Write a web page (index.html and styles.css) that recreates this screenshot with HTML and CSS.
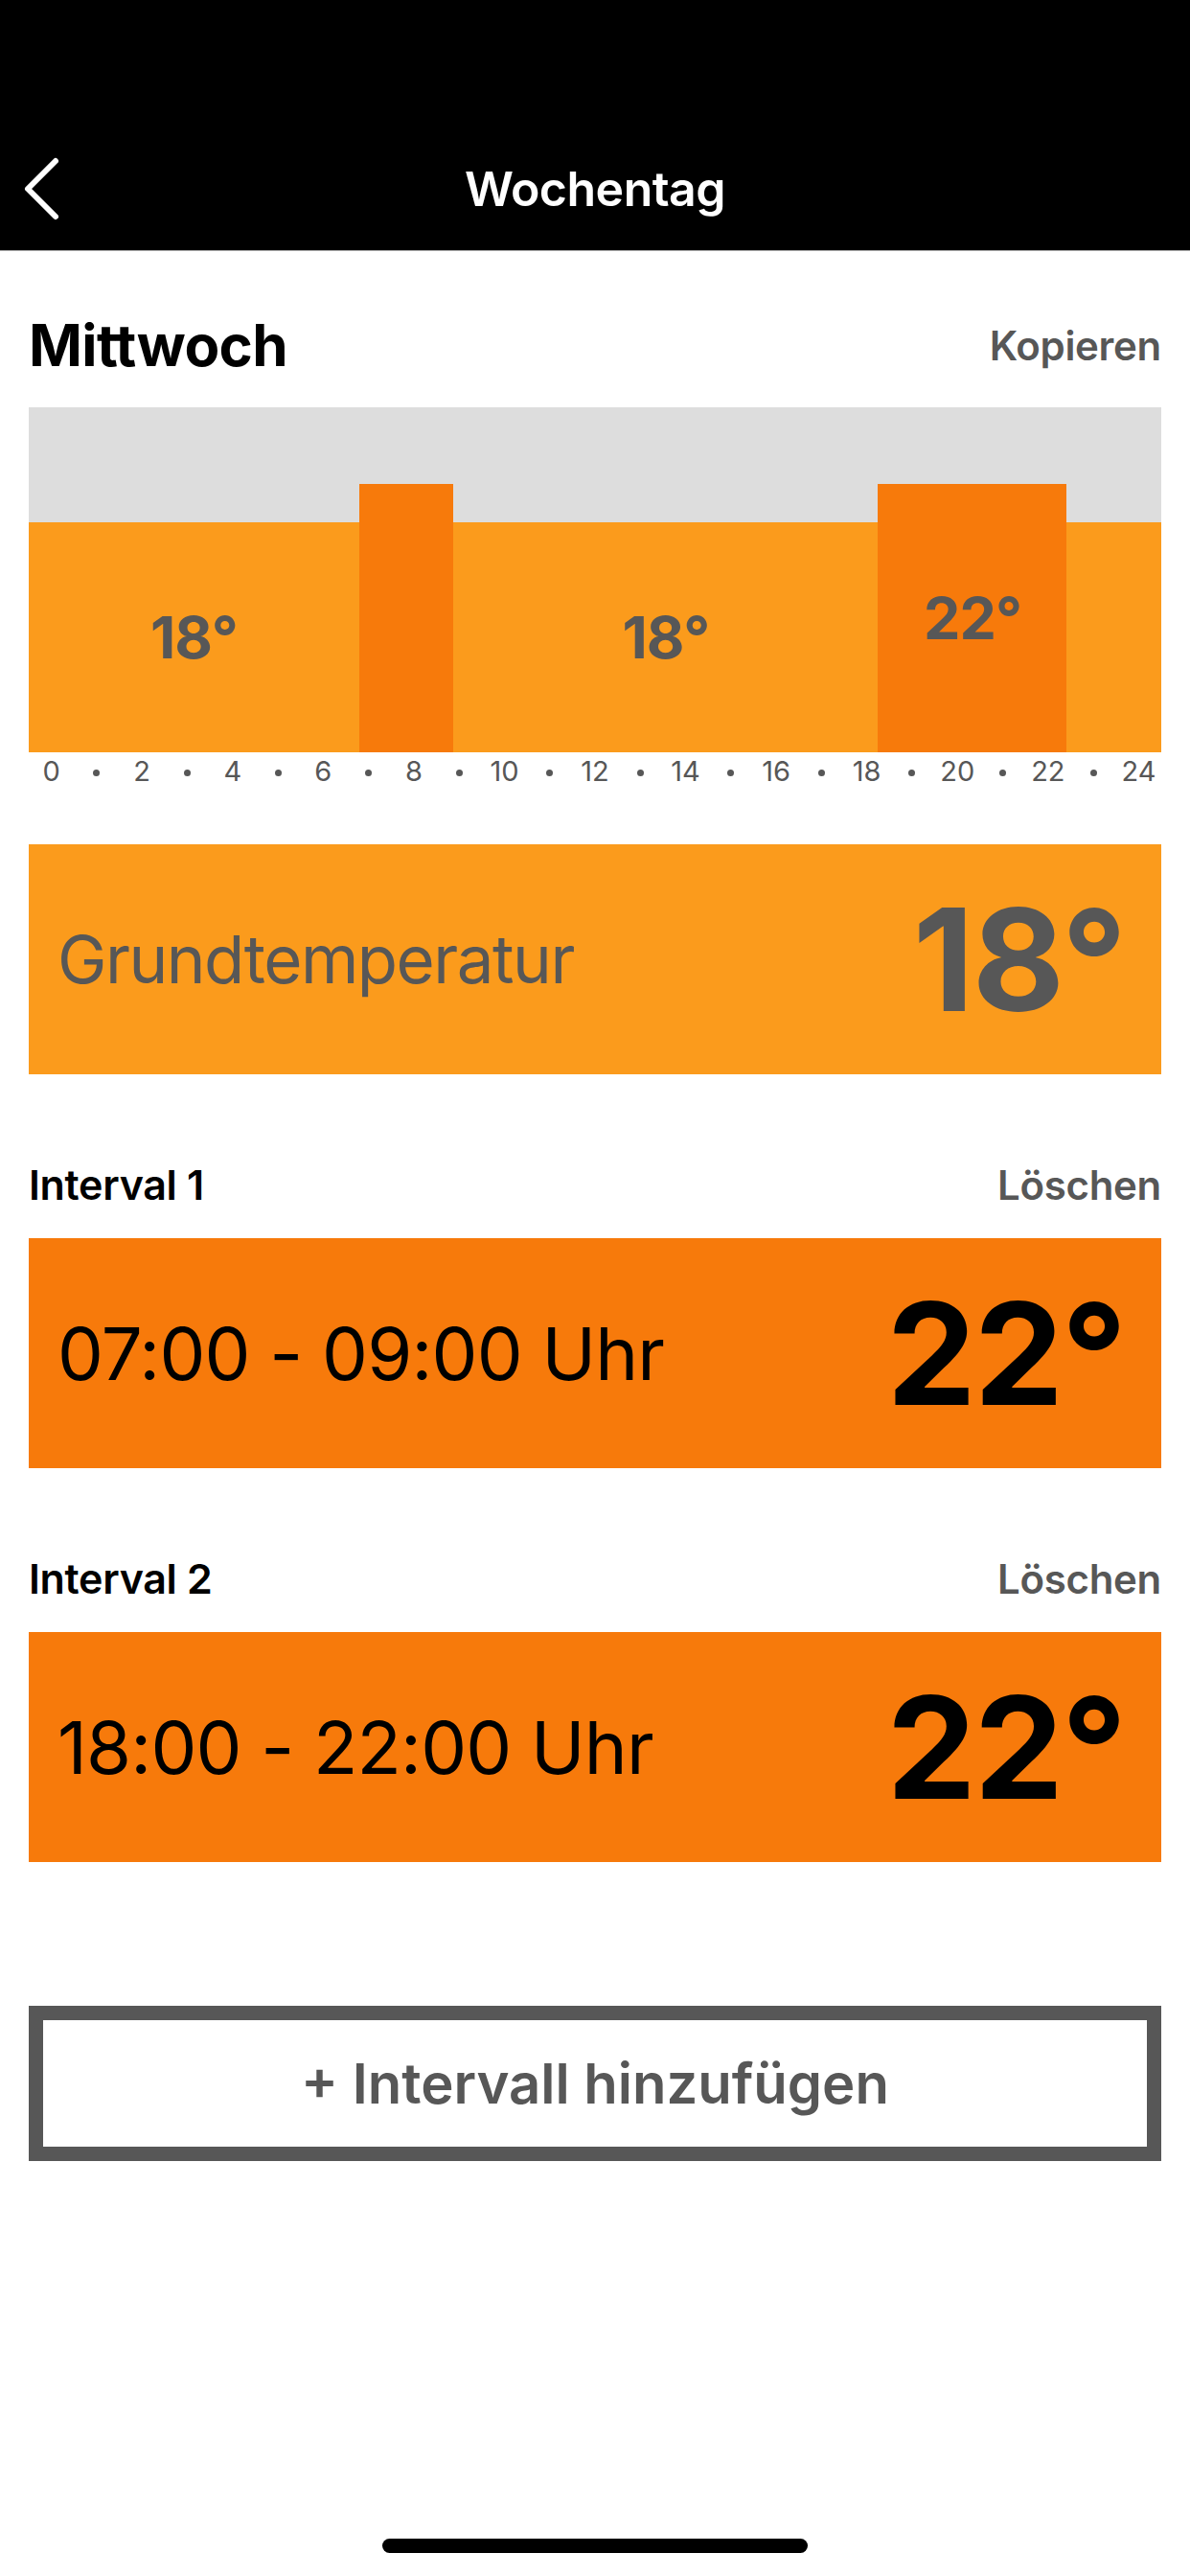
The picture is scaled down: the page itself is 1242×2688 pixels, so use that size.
FILE: index.html
```html
<!DOCTYPE html>
<html lang="de">
<head>
  <meta charset="UTF-8">
  <meta name="viewport" content="width=device-width, initial-scale=1.0">
  <title>Wochentag</title>
  <link rel="stylesheet" href="styles.css">
</head>
<body>
  <header class="topbar">
    <div class="nav">
      <a class="back" href="#">
        <svg width="44" height="70" viewBox="0 0 44 70">
          <polyline points="34,6 5,35 34,64" fill="none" stroke="#fff" stroke-width="6" stroke-linecap="round" stroke-linejoin="round"/>
        </svg>
      </a>
      <h1 class="nav-title">Wochentag</h1>
      <span></span>
    </div>
  </header>

  <main class="content">
    <div class="day-head">
      <h2 class="day-name">Mittwoch</h2>
      <a class="link" href="#">Kopieren</a>
    </div>

    <!-- Tagesverlauf: Breite = Stunden / 24 -->
    <div class="chart">
      <div class="seg seg-base" style="width: 29.1667%"><span>18°</span></div>
      <div class="seg seg-int" style="width: 8.3333%"></div>
      <div class="seg seg-base" style="width: 37.5%"><span>18°</span></div>
      <div class="seg seg-int" style="width: 16.6667%"><span>22°</span></div>
      <div class="seg seg-base" style="width: 8.3333%"></div>
    </div>
    <div class="axis">
      <span>0</span><span><i class="dot"></i></span>
      <span>2</span><span><i class="dot"></i></span>
      <span>4</span><span><i class="dot"></i></span>
      <span>6</span><span><i class="dot"></i></span>
      <span>8</span><span><i class="dot"></i></span>
      <span>10</span><span><i class="dot"></i></span>
      <span>12</span><span><i class="dot"></i></span>
      <span>14</span><span><i class="dot"></i></span>
      <span>16</span><span><i class="dot"></i></span>
      <span>18</span><span><i class="dot"></i></span>
      <span>20</span><span><i class="dot"></i></span>
      <span>22</span><span><i class="dot"></i></span>
      <span>24</span>
    </div>

    <div class="card card-base">
      <span class="card-label">Grundtemperatur</span>
      <span class="card-temp">18°</span>
    </div>

    <div class="interval-head">
      <h3>Interval 1</h3>
      <a class="link" href="#">Löschen</a>
    </div>
    <div class="card card-int">
      <span class="card-label">07:00 - 09:00 Uhr</span>
      <span class="card-temp">22°</span>
    </div>

    <div class="interval-head">
      <h3>Interval 2</h3>
      <a class="link" href="#">Löschen</a>
    </div>
    <div class="card card-int">
      <span class="card-label">18:00 - 22:00 Uhr</span>
      <span class="card-temp">22°</span>
    </div>

    <button class="add-btn">+ Intervall hinzufügen</button>
  </main>

  <div class="home-indicator"></div>
</body>
</html>
```

FILE: styles.css
```css
body {
  margin: 0;
  width: 1242px;
  height: 2688px;
  position: relative;
  background-color: #fff;
  color: #000;
  font-family: Inter, "Noto Sans", sans-serif;
  overflow: hidden;
}
h1, h2, h3 {
  margin: 0;
}
a {
  text-decoration: none;
}

.topbar {
  height: 262px;
  box-sizing: border-box;
  padding-top: 140px;
  background-color: #000;
  border-bottom: 1px solid #a8a8a8;
}
.nav {
  height: 114px;
  display: grid;
  grid-template-columns: 1fr auto 1fr;
  align-items: center;
}
.back {
  display: flex;
  align-items: center;
  padding-left: 24px;
}
.nav-title {
  color: #fff;
  font-size: 50px;
  font-weight: 600;
  letter-spacing: -0.5px;
}

.content {
  padding: 0 30px;
}
.day-head {
  margin-top: 63px;
  height: 70px;
  display: flex;
  justify-content: space-between;
  align-items: center;
}
.day-name {
  font-size: 60px;
  font-weight: 700;
  letter-spacing: -0.6px;
}
.link {
  color: #575757;
  font-size: 42px;
  font-weight: 600;
  letter-spacing: -0.3px;
}

.chart {
  margin-top: 30px;
  height: 360px;
  display: flex;
  align-items: flex-end;
  background-color: #dddddd;
}
.seg {
  display: flex;
  justify-content: center;
  align-items: center;
  color: #575757;
  font-size: 61px;
  font-weight: 700;
  letter-spacing: -1px;
}
.seg-base {
  height: 240px;
  background-color: #fb9b1c;
}
.seg-int {
  height: 280px;
  background-color: #f77a0b;
}
.axis {
  height: 40px;
  display: flex;
  color: #575757;
  font-size: 29px;
  line-height: 40px;
}
.axis span {
  flex: 1;
  text-align: center;
}
.dot {
  display: inline-block;
  width: 7px;
  height: 7px;
  border-radius: 50%;
  background-color: #575757;
  vertical-align: middle;
  margin-top: -2px;
}

.card {
  height: 240px;
  box-sizing: border-box;
  padding: 0 38px 0 30px;
  display: flex;
  justify-content: space-between;
  align-items: center;
}
.card-base {
  margin-top: 56px;
  background-color: #fb9b1c;
  color: #575757;
}
.card-base .card-label {
  font-size: 69px;
  letter-spacing: -1.5px;
}
.card-int {
  margin-top: 26px;
  background-color: #f77a0b;
  color: #000;
}
.card-int .card-label {
  font-size: 76px;
  letter-spacing: -0.8px;
}
.card-temp {
  font-size: 148px;
  font-weight: 700;
  letter-spacing: -2px;
}

.interval-head {
  margin-top: 85px;
  height: 60px;
  display: flex;
  justify-content: space-between;
  align-items: center;
}
.interval-head h3 {
  font-size: 43px;
  font-weight: 600;
  letter-spacing: -0.3px;
}

.add-btn {
  margin-top: 150px;
  width: 100%;
  height: 162px;
  background-color: #fff;
  border: 15px solid #575757;
  color: #575757;
  font-family: inherit;
  font-size: 58px;
  font-weight: 600;
  cursor: pointer;
}

.home-indicator {
  position: absolute;
  left: 399px;
  bottom: 24px;
  width: 444px;
  height: 15px;
  border-radius: 8px;
  background-color: #000;
}
```
